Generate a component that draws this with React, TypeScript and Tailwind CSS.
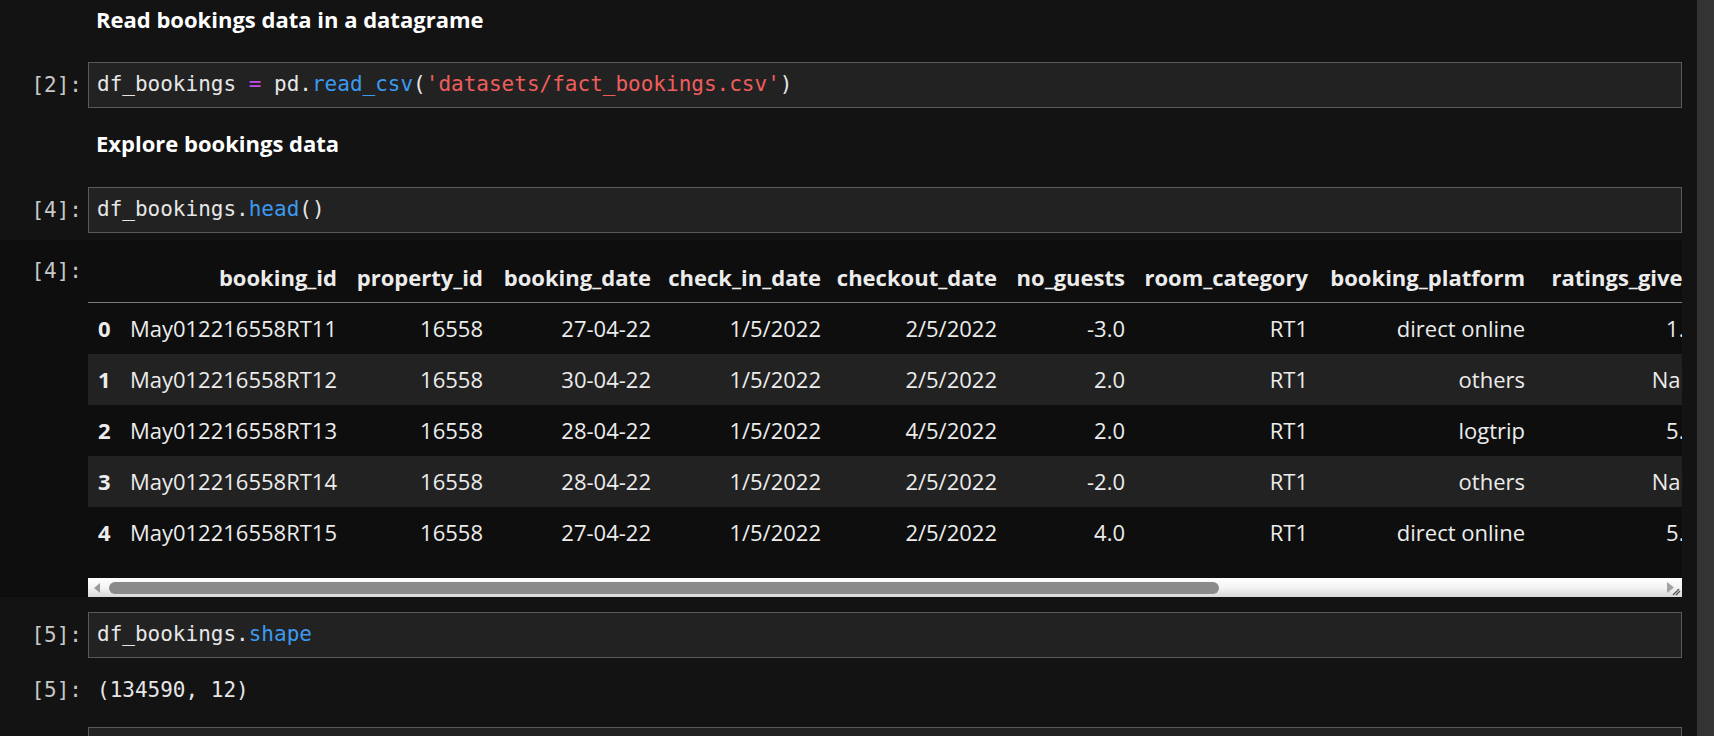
import React from 'react';

const columns = [
  'booking_id',
  'property_id',
  'booking_date',
  'check_in_date',
  'checkout_date',
  'no_guests',
  'room_category',
  'booking_platform',
  'ratings_given',
];

const rows = [
  ['May012216558RT11', '16558', '27-04-22', '1/5/2022', '2/5/2022', '-3.0', 'RT1', 'direct online', '1.0'],
  ['May012216558RT12', '16558', '30-04-22', '1/5/2022', '2/5/2022', '2.0', 'RT1', 'others', 'NaN'],
  ['May012216558RT13', '16558', '28-04-22', '1/5/2022', '4/5/2022', '2.0', 'RT1', 'logtrip', '5.0'],
  ['May012216558RT14', '16558', '28-04-22', '1/5/2022', '2/5/2022', '-2.0', 'RT1', 'others', 'NaN'],
  ['May012216558RT15', '16558', '27-04-22', '1/5/2022', '2/5/2022', '4.0', 'RT1', 'direct online', '5.0'],
];

const gridCols =
  'grid grid-cols-[22px_227px_146px_168px_170px_176px_128px_183px_217px_172px] w-[1609px]';

const Prompt: React.FC<{ n: number; className?: string }> = ({ n, className = '' }) => (
  <div
    className={`w-[88px] shrink-0 pr-[6px] text-right text-[21px] text-[#c8c8c8] font-['DejaVu_Sans_Mono',monospace] ${className}`}
  >
    [{n}]:
  </div>
);

const CodeCell: React.FC<{ n: number; children: React.ReactNode }> = ({ n, children }) => (
  <div className="flex items-center">
    <Prompt n={n} className="leading-[46px]" />
    <div className="w-[1594px] h-[46px] shrink-0 bg-[#222222] border border-[#5a5a5a] pl-[8px] flex items-center text-[21px] text-[#e6e6e6] font-['DejaVu_Sans_Mono',monospace] whitespace-pre">
      {children}
    </div>
  </div>
);

const Heading: React.FC<{ children: React.ReactNode }> = ({ children }) => (
  <div className="pl-[96px] h-[38px] leading-[38px] text-[22px] font-bold text-white font-['Open_Sans',sans-serif]">
    {children}
  </div>
);

const HScrollbar: React.FC = () => (
  <div className="relative h-[19px] w-[1594px] bg-linear-to-b from-[#fefefe] via-[#f4f4f4] to-[#d8d8d8] flex items-center">
    {/* left arrow */}
    <svg className="ml-[5px] w-[8px] h-[10px]" viewBox="0 0 8 10">
      <polygon points="7,0 7,10 1,5" fill="#9a9a9a" />
    </svg>
    {/* thumb */}
    <div className="ml-[8px] w-[1110px] h-[12px] rounded-full bg-[#8a8a8a]" />
    {/* right arrow + grip */}
    <svg className="absolute right-[1px] top-[3px] w-[16px] h-[15px]" viewBox="0 0 16 15">
      <polygon points="2,1 2,12 9,6.5" fill="#a3a3a3" />
      <line x1="8" y1="14" x2="14" y2="8" stroke="#555" strokeWidth="1.3" />
      <line x1="11" y1="14" x2="15" y2="10" stroke="#555" strokeWidth="1.3" />
    </svg>
  </div>
);

const DataFrame: React.FC = () => (
  <div className="w-[1594px] overflow-hidden text-[22px] text-[#ececec] font-['Open_Sans',sans-serif]">
    <div className={`${gridCols} h-[51px] items-center border-b border-[#7a7a7a] font-bold`}>
      <div />
      {columns.map((c) => (
        <div key={c} className="text-right whitespace-nowrap">
          {c}
        </div>
      ))}
    </div>
    {rows.map((r, i) => (
      <div key={i} className={`${gridCols} h-[51px] items-center ${i % 2 === 1 ? 'bg-[#222222]' : ''}`}>
        <div className="pl-[10px] font-bold">{i}</div>
        {r.map((v, j) => (
          <div key={j} className="text-right whitespace-nowrap">
            {v}
          </div>
        ))}
      </div>
    ))}
  </div>
);

const App: React.FC = () => {
  return (
    <div className="w-[1714px] h-[736px] overflow-hidden flex bg-[#131313]">
      {/* Notebook column */}
      <div className="flex-1 min-w-0">
        <Heading>Read bookings data in a datagrame</Heading>

        <div className="mt-[24px]">
          <CodeCell n={2}>
            <span>df_bookings </span>
            <span className="text-[#c64de8]">=</span>
            <span> pd.</span>
            <span className="text-[#3b9af0]">read_csv</span>
            <span>(</span>
            <span className="text-[#f05d5d]">'datasets/fact_bookings.csv'</span>
            <span>)</span>
          </CodeCell>
        </div>

        <div className="mt-[16px]">
          <Heading>Explore bookings data</Heading>
        </div>

        <div className="mt-[25px]">
          <CodeCell n={4}>
            <span>df_bookings.</span>
            <span className="text-[#3b9af0]">head</span>
            <span>()</span>
          </CodeCell>
        </div>

        {/* Output of [4] */}
        <div className="mt-[7px] w-[1682px] bg-[#0e0e0e] pt-[12px] flex">
          <Prompt n={4} className="leading-[38px] self-start" />
          <div className="flex flex-col">
            <DataFrame />
            <div className="mt-[20px]">
              <HScrollbar />
            </div>
          </div>
        </div>

        <div className="mt-[15px]">
          <CodeCell n={5}>
            <span>df_bookings.</span>
            <span className="text-[#3b9af0]">shape</span>
          </CodeCell>
        </div>

        <div className="mt-[12px] flex items-center h-[42px]">
          <Prompt n={5} />
          <div className="pl-[9px] text-[21px] text-[#e6e6e6] font-['DejaVu_Sans_Mono',monospace] whitespace-pre">
            (134590, 12)
          </div>
        </div>

        <div className="mt-[15px] flex">
          <div className="w-[88px] shrink-0" />
          <div className="w-[1594px] h-[46px] shrink-0 bg-[#222222] border border-[#5a5a5a]" />
        </div>
      </div>

      {/* Vertical scrollbar strip */}
      <div className="w-[17px] shrink-0 bg-[#333333]" />
    </div>
  );
};

export default App;
